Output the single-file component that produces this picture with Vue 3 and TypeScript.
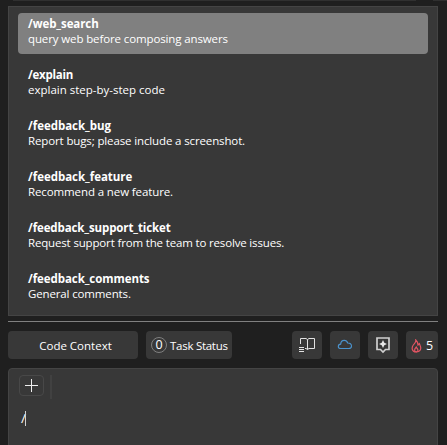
<script setup lang="ts">
interface Command {
  name: string
  description: string
  nameSpacing: string
  textSpacing: string
}

const commands: Command[] = [
  { name: '/web_search', description: 'query web before composing answers', nameSpacing: '-0.08px', textSpacing: '-0.12px' },
  { name: '/explain', description: 'explain step-by-step code', nameSpacing: '-0.25px', textSpacing: '0px' },
  { name: '/feedback_bug', description: 'Report bugs; please include a screenshot.', nameSpacing: '-0.03px', textSpacing: '-0.13px' },
  { name: '/feedback_feature', description: 'Recommend a new feature.', nameSpacing: '-0.03px', textSpacing: '-0.11px' },
  { name: '/feedback_support_ticket', description: 'Request support from the team to resolve issues.', nameSpacing: '-0.11px', textSpacing: '-0.16px' },
  { name: '/feedback_comments', description: 'General comments.', nameSpacing: '-0.07px', textSpacing: '-0.14px' },
]
const selected = 0
</script>

<template>
  <main class="app">
    <div class="top-strip"><span class="strip-main"></span><span class="strip-end"></span></div>
    <section class="commands">
      <div v-for="(command, index) in commands" :key="command.name" class="command" :class="{ selected: index === selected }">
        <div class="name" :style="{ letterSpacing: command.nameSpacing }">{{ command.name }}</div>
        <div class="description" :style="{ letterSpacing: command.textSpacing }">{{ command.description }}</div>
      </div>
    </section>
    <div class="divider"></div>
    <nav class="toolbar">
      <button class="button context"><span>Code Context</span></button>
      <button class="button status"><span class="count">0</span><span class="status-text">Task Status</span></button>
      <span class="spacer"></span>
      <button class="button icon" aria-label="Docs">
        <svg width="18" height="18" viewBox="0 0 18 18" fill="none" stroke="#e2e2e2">
          <path d="M2.5 8V2.5H8L9.500 3.500L11 2.500H16.500V12.500H11L9.500 13.500L8 12.500H7" />
          <path d="M9.500 3.500V13.500" />
          <path d="M1 11.500H6M1 13.500H6M1 15.500H6" />
        </svg>
      </button>
      <button class="button icon" aria-label="Cloud">
        <svg width="16" height="12" viewBox="0 0 16 12" fill="none" stroke="#4b94cf" stroke-width="1.100">
          <path d="M4 9.500C2.200 9.500 1.300 8.700 1.300 7.400C1.300 6.100 2.200 5.200 3.700 5.100C3.900 2.700 5.200 1.400 7.200 1.400C9 1.400 10.200 2.400 10.700 4C12.900 3.900 14.500 5.100 14.500 6.900C14.500 8.600 13.400 9.500 11.700 9.500Z" />
        </svg>
      </button>
      <button class="button icon" aria-label="Assistant">
        <svg width="16" height="18" viewBox="0 0 16 18">
          <path d="M2 2H14V13.500H10.500L8 16L5.500 13.500H2Z" fill="none" stroke="#d0d0d0" stroke-width="1.700" />
          <path d="M8 4L9.300 6.700L12 8L9.300 9.300L8 12L6.700 9.300L4 8L6.700 6.700Z" fill="#e8e8e8" />
        </svg>
      </button>
      <button class="button streak">
        <svg class="flame" width="11" height="14" viewBox="0 0 11 14" fill="none" stroke="#e25563" stroke-width="1.200">
          <path d="M4.800 1C5.200 3.400 3.700 4.200 2.300 6C.5 8.400.5 12.900 5 13C9.700 13 10.300 9.400 9.300 7C8.900 6 8.600 5.400 8.400 4.700L7 6C6.800 3.800 6.300 2.200 4.800 1Z" />
          <path d="M5.300 8C4 9.300 3.500 10.200 3.600 11.200C3.700 12.300 4.300 12.800 5.200 12.800C6.300 12.800 7 12.100 6.900 11C6.900 9.900 6 9.200 5.300 8Z" />
        </svg>
        <span class="five">5</span>
      </button>
    </nav>
    <section class="prompt">
      <div class="prompt-tools">
        <button class="add" aria-label="Add">
          <svg width="13" height="13" viewBox="0 0 13 13" stroke="#eeeeee"><path d="M0 6.500H13M6.500 0V13" /></svg>
        </button>
        <span class="tool-divider"></span>
      </div>
      <div class="entry"><span class="typed">/</span><i class="caret"></i></div>
    </section>
  </main>
</template>

<style>
html, body { margin: 0; background: #1f1f1f; overflow: hidden; }
</style>

<style scoped>
.app { box-sizing: border-box; width: 447px; height: 445px; padding-right: 9px; padding-left: 8px; overflow: hidden; background: #1f1f1f; color: #fff; font: 11.5px/15px "Open Sans", "Noto Sans", sans-serif; }
.top-strip { display: flex; gap: 17px; height: 1px; margin-right: -9px; padding-left: 5px; }
.strip-main { width: 403px; background: #303030; }
.strip-end { flex: 1; background: #303030; }
.commands { box-sizing: border-box; display: flex; flex-direction: column; gap: 10px; height: 310px; margin-top: 5px; padding: 6px 9px; border: 1px solid #444; background: #383838; }
.command { box-sizing: border-box; flex: none; height: 41px; padding: 3px 10px; border-radius: 4px; white-space: nowrap; }
.selected { background: #808080; }
.name { height: 15px; font-weight: 700; }
.description { height: 15px; }
.divider { height: 1px; margin-top: 5px; background: #808080; }
.toolbar { display: flex; gap: 8px; height: 28px; margin-top: 9px; }
.button { box-sizing: border-box; display: flex; align-items: center; justify-content: center; height: 28px; padding: 0; border: 0; border-radius: 4px; background: #383838; color: #fff; font: inherit; white-space: nowrap; }
.context { width: 130px; padding-left: 5px; }
.status { width: 86px; justify-content: flex-start; gap: 3px; padding-left: 5px; }
.status-text { letter-spacing: -0.27px; }
.count { box-sizing: border-box; width: 16px; height: 16px; border: 1px solid #808080; border-radius: 50%; font-size: 12.5px; line-height: 14px; text-align: center; }
.spacer { flex: 1; }
.icon { width: 30px; }
.streak { width: 32px; gap: 4px; }
.flame { margin-top: 2px; }
.five { font-size: 12.5px; }
.prompt { box-sizing: border-box; height: 90px; margin-top: 9px; padding: 6px 10px; border: 1px solid #444; border-radius: 4px; background: #383838; }
.prompt-tools { display: flex; gap: 6px; height: 25px; }
.add { box-sizing: border-box; display: flex; align-items: center; justify-content: center; width: 25px; height: 21px; padding: 0; border: 1px solid #484848; border-radius: 4px; background: transparent; }
.tool-divider { width: 2px; height: 24px; background: #414141; }
.entry { display: flex; align-items: center; height: 15px; margin-top: 11px; padding-left: 2px; }
.typed { font-size: 13.5px; letter-spacing: -0.5px; }
.caret { width: 1px; height: 15px; background: #d0d0d0; }
</style>
